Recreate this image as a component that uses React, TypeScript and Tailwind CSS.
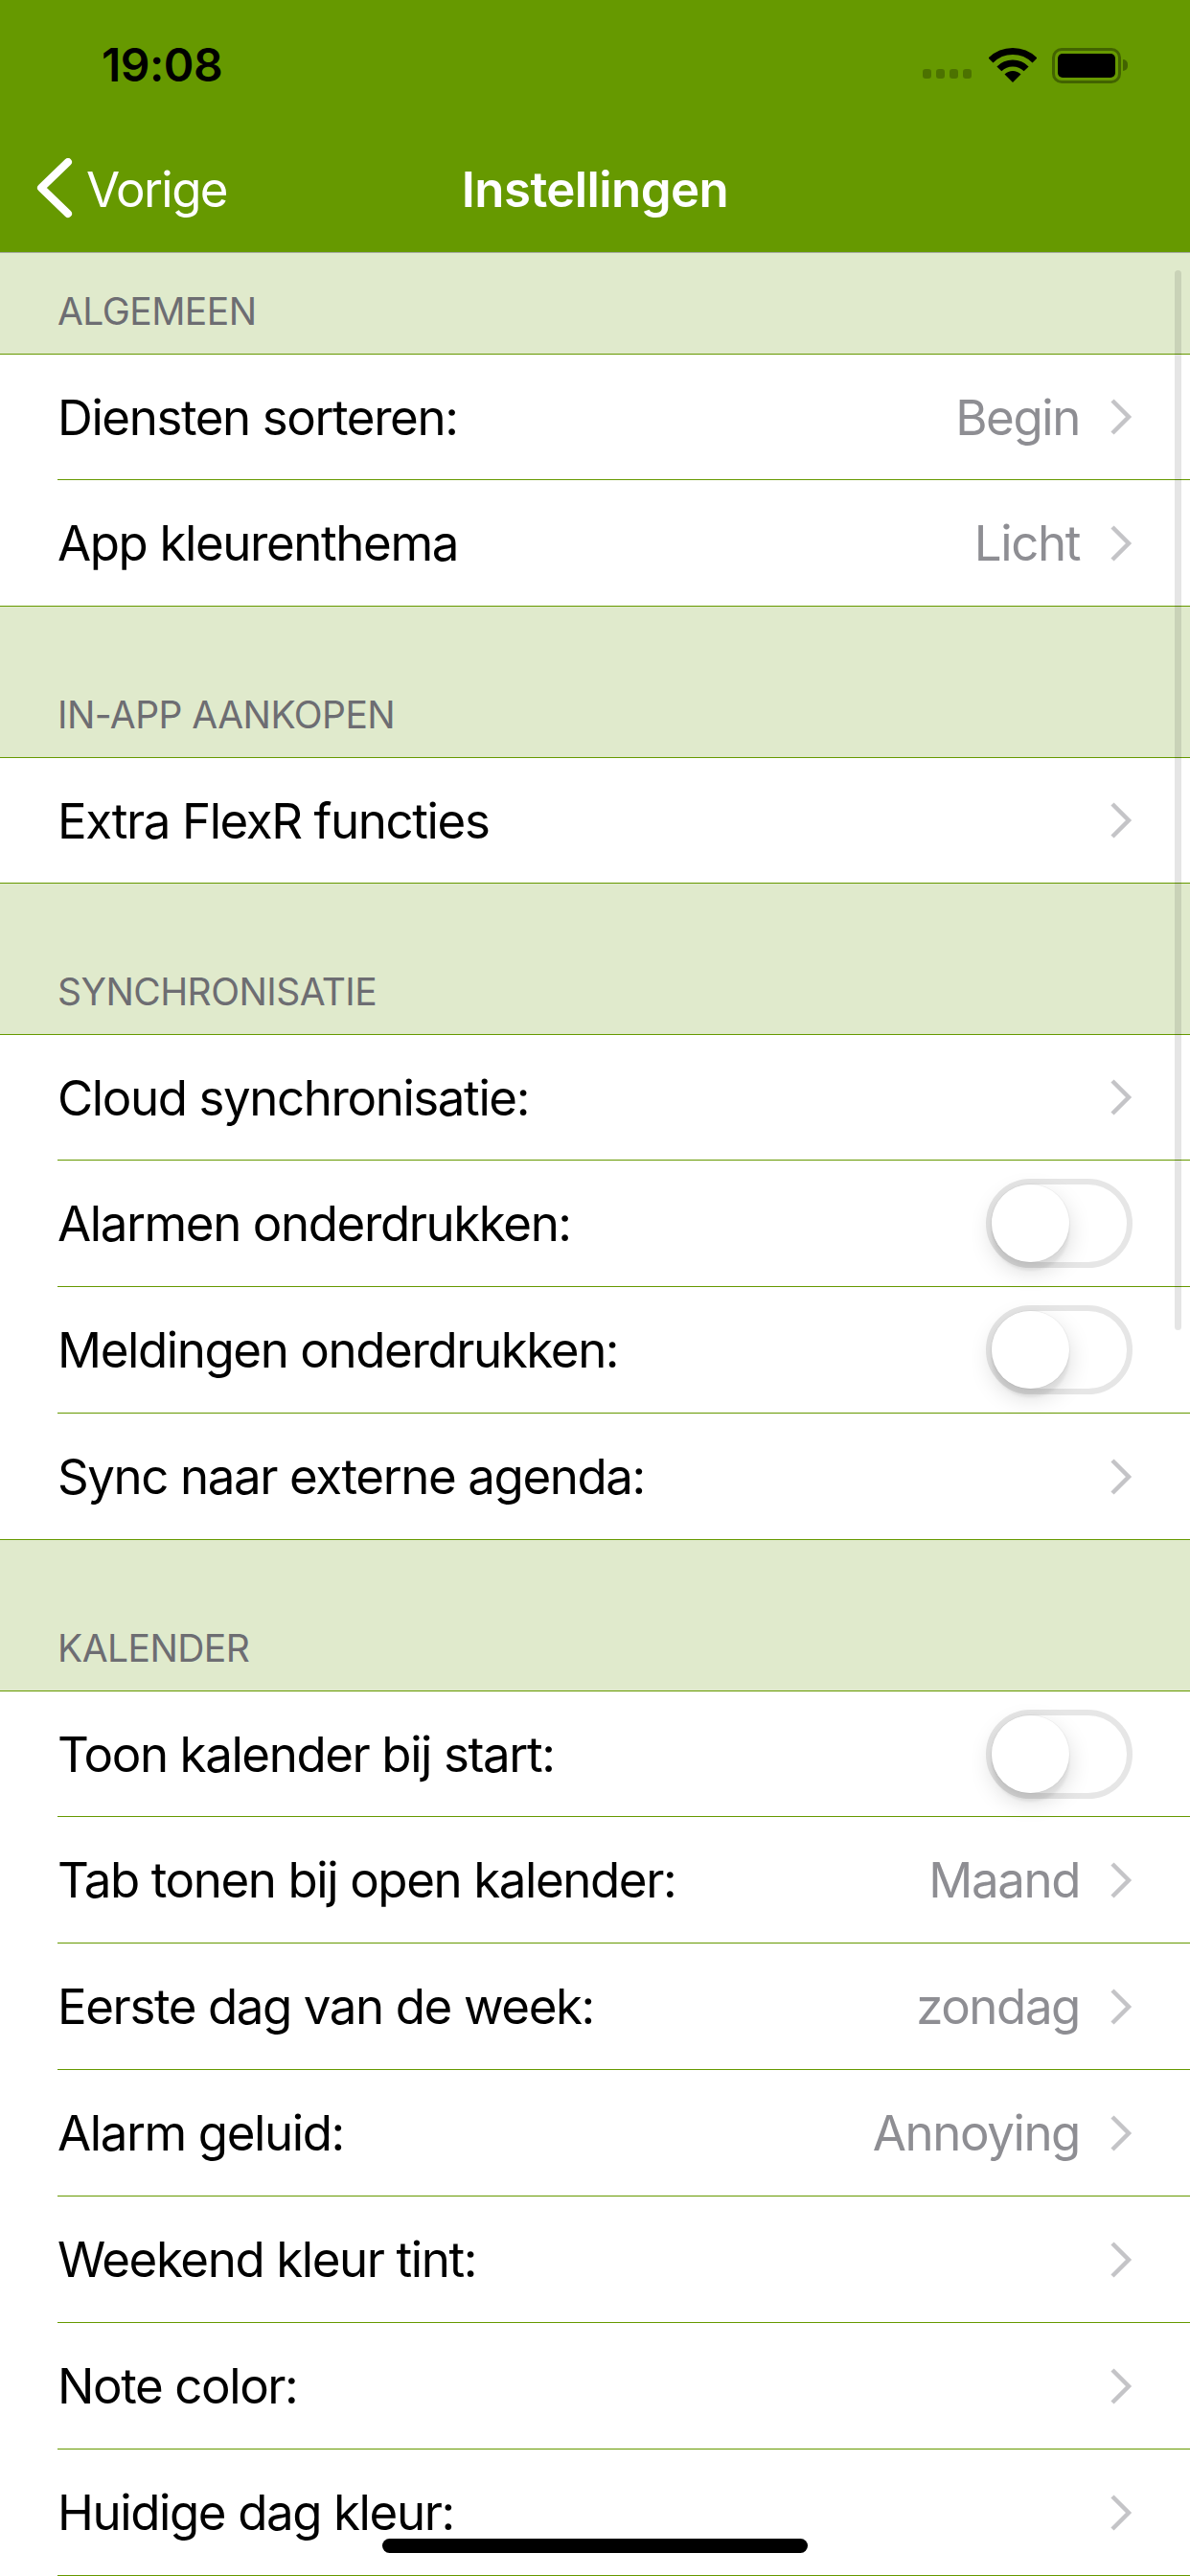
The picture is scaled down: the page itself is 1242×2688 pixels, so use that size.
import React from "react";

function Chevron() {
  return (
    <svg width="24" height="40" viewBox="0 0 24 40" className="shrink-0">
      <polyline points="3,3 20,20 3,37" fill="none" stroke="#c4c4c7" strokeWidth="4.5" strokeLinecap="butt" strokeLinejoin="miter" />
    </svg>
  );
}

function Toggle() {
  return (
    <div className="relative w-[153px] h-[93px] rounded-full border-[6px] border-[#e6e6e6] bg-white shrink-0">
      <div className="absolute left-0 top-0 w-[81px] h-[81px] rounded-full bg-white shadow-[0_9px_24px_rgba(0,0,0,0.15),0_9px_3px_rgba(0,0,0,0.06),0_0_0_1px_rgba(0,0,0,0.04)]" />
    </div>
  );
}

type RowProps = {
  label: string;
  value?: string;
  kind?: "chevron" | "toggle";
  first?: boolean;
  last?: boolean;
};

function Row({ label, value, kind = "chevron", first, last }: RowProps) {
  return (
    <div className={`bg-white pl-[60px] ${first ? "h-[131px]" : "h-[132px]"} ${last ? "border-b border-[#669900]" : ""}`}>
      <div className={`h-full flex items-center pr-[60px] ${last ? "" : "border-b border-[#669900]"}`}>
        <span className="flex-1 text-[51px] leading-none text-black tracking-[-1.4px]">{label}</span>
        {kind === "chevron" ? (
          <div className="flex items-center gap-[31px]">
            {value ? <span className="text-[51px] leading-none text-[#8e8e93] tracking-[-1.4px]">{value}</span> : null}
            <Chevron />
          </div>
        ) : (
          <Toggle />
        )}
      </div>
    </div>
  );
}

function Header({ title, tall }: { title: string; tall?: boolean }) {
  return (
    <div className={`bg-[#e0eacc] border-b border-[#669900] flex items-end pl-[60px] pb-[25px] ${tall ? "h-[158px]" : "h-[106px]"}`}>
      <span className="text-[39px] leading-none text-[#6d6d72] uppercase tracking-[-0.55px]">{title}</span>
    </div>
  );
}

function Wifi() {
  return (
    <svg width="50" height="37" viewBox="0 0 50 37">
      <path d="M2.02 13.02 A32.5 32.5 0 0 1 47.98 13.02" fill="none" stroke="black" strokeWidth="7" />
      <path d="M10.86 21.86 A20 20 0 0 1 39.14 21.86" fill="none" stroke="black" strokeWidth="7" />
      <path d="M25 36 L16.51 27.51 A12 12 0 0 1 33.49 27.51 Z" fill="black" />
    </svg>
  );
}

function Battery() {
  return (
    <div className="flex items-center">
      <div className="w-[72px] h-[37px] rounded-[10px] border-[3px] border-black/35 p-[3px]">
        <div className="w-full h-full rounded-[5px] bg-black" />
      </div>
      <div className="w-[5px] h-[12px] rounded-r-full bg-black/35 ml-[2px]" />
    </div>
  );
}

export default function App() {
  return (
    <div className="relative w-[1242px] h-[2688px] overflow-hidden bg-white font-['Inter',sans-serif]">
      <div className="bg-[#669900] h-[264px] border-b border-[#a3a89c] flex flex-col">
        <div className="h-[136px] flex items-center justify-between pl-[106px] pr-[65px]">
          <span className="text-[48px] leading-none font-semibold text-black tracking-[-0.5px]">19:08</span>
          <div className="flex items-center">
            <div className="flex items-end gap-[5px] mr-[18px] mt-[18px]">
              <div className="w-[9px] h-[10px] rounded-[3px] bg-black/25" />
              <div className="w-[9px] h-[10px] rounded-[3px] bg-black/25" />
              <div className="w-[9px] h-[10px] rounded-[3px] bg-black/25" />
              <div className="w-[9px] h-[10px] rounded-[3px] bg-black/25" />
            </div>
            <div className="mr-[16px]">
              <Wifi />
            </div>
            <Battery />
          </div>
        </div>
        <div className="flex-1 grid grid-cols-[1fr_auto_1fr] items-center pb-[4px]">
          <div className="flex items-center pl-[38px]">
            <svg width="40" height="66" viewBox="0 0 40 66">
              <polyline points="33,4 5,31 33,58" fill="none" stroke="white" strokeWidth="8" strokeLinecap="round" strokeLinejoin="round" />
            </svg>
            <span className="ml-[12px] text-[51px] leading-none text-white tracking-[-1.6px]">Vorige</span>
          </div>
          <span className="text-[51px] leading-none font-semibold text-white tracking-[-0.6px]">Instellingen</span>
          <div />
        </div>
      </div>

      <Header title="Algemeen" />
      <Row first label="Diensten sorteren:" value="Begin" />
      <Row last label="App kleurenthema" value="Licht" />

      <Header tall title="In-app aankopen" />
      <Row first last label="Extra FlexR functies" />

      <Header tall title="Synchronisatie" />
      <Row first label="Cloud synchronisatie:" />
      <Row label="Alarmen onderdrukken:" kind="toggle" />
      <Row label="Meldingen onderdrukken:" kind="toggle" />
      <Row last label="Sync naar externe agenda:" />

      <Header tall title="Kalender" />
      <Row first label="Toon kalender bij start:" kind="toggle" />
      <Row label="Tab tonen bij open kalender:" value="Maand" />
      <Row label="Eerste dag van de week:" value="zondag" />
      <Row label="Alarm geluid:" value="Annoying" />
      <Row label="Weekend kleur tint:" />
      <Row label="Note color:" />
      <Row label="Huidige dag kleur:" />

      <div className="absolute left-[1226px] top-[282px] w-[7px] h-[1106px] rounded-full bg-black/10" />
      <div className="absolute left-[399px] top-[2649px] w-[444px] h-[15px] rounded-full bg-black" />
    </div>
  );
}
